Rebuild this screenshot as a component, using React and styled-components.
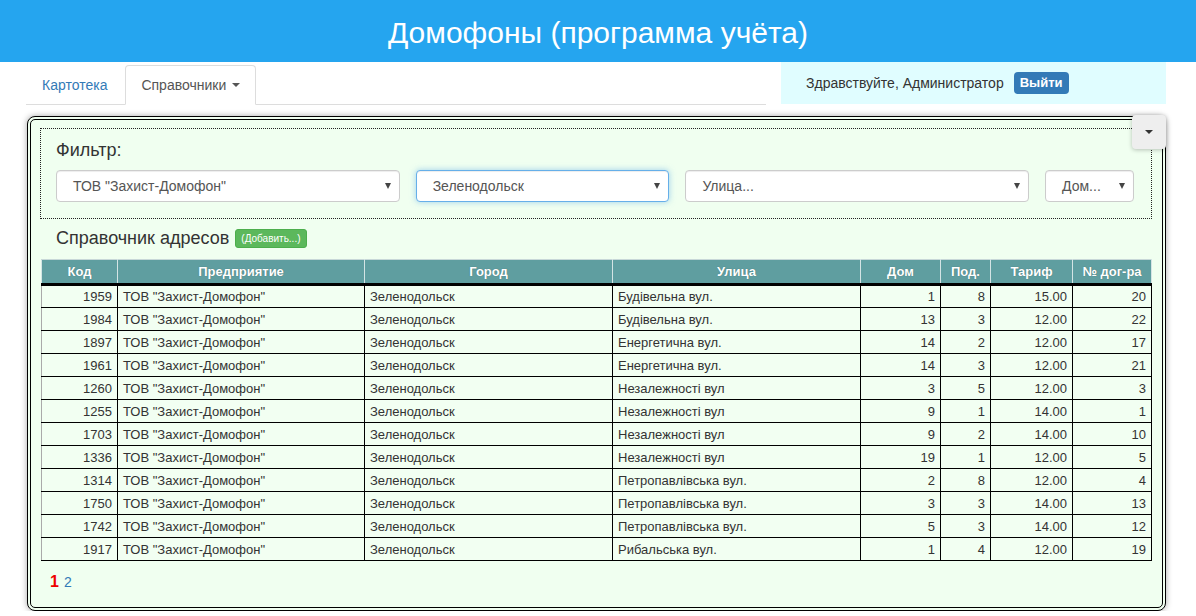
import React from "react";
import styled, { createGlobalStyle } from "styled-components";

const Global = createGlobalStyle`
  html, body { margin: 0; padding: 0; background: #fff; }
  body { font-family: "Liberation Sans", Arial, sans-serif; font-size: 14px; color: #333; }
  * { box-sizing: border-box; }
`;

const Header = styled.header`
  height: 62px;
  background: #25a5ef;
  display: flex;
  align-items: center;
  justify-content: center;
  padding-top: 4px;
`;

const Title = styled.h1`
  margin: 0;
  color: #fff;
  font-size: 30px;
  font-weight: normal;
  line-height: 1;
`;

const Container = styled.div`
  width: 1140px;
  margin-left: 26px;
`;

const NavRow = styled.div`
  display: flex;
  align-items: stretch;
  height: 43px;
`;

const Tabs = styled.ul`
  list-style: none;
  margin: 0;
  padding: 2px 0 0;
  width: 740px;
  display: flex;
  align-items: flex-end;
  border-bottom: 1px solid #ddd;
`;

const Tab = styled.li`
  margin-right: 2px;
  margin-bottom: -1px;
  height: 40px;
  padding: 10px 15px;
  line-height: 20px;
  font-size: 14px;
  color: ${(p) => (p.$active ? "#555" : "#337ab7")};
  background: ${(p) => (p.$active ? "#fff" : "transparent")};
  border: 1px solid ${(p) => (p.$active ? "#ddd" : "transparent")};
  border-bottom-color: transparent;
  border-radius: 4px 4px 0 0;
  display: flex;
  align-items: center;
  gap: 6px;
`;

const Caret = styled.span`
  display: inline-block;
  width: 0;
  height: 0;
  border-top: 4px solid ${(p) => p.$color || "#555"};
  border-left: 4px solid transparent;
  border-right: 4px solid transparent;
`;

const UserBox = styled.div`
  margin-left: 15px;
  width: 385px;
  height: 42px;
  background: #e0fdff;
  display: flex;
  align-items: center;
  padding-left: 25px;
  gap: 10px;
  font-size: 14px;
  color: #333;
`;

const LogoutButton = styled.span`
  background: #337ab7;
  color: #fff;
  font-weight: bold;
  font-size: 13px;
  line-height: 18px;
  padding: 2px 6px;
  border-radius: 4px;
`;

const Panel = styled.section`
  position: relative;
  margin-top: 11px;
  margin-left: 1px;
  width: 1139px;
  background: #f0fff0;
  border: 4px double #000;
  border-radius: 8px;
  box-shadow: 0 0 6px rgba(0, 0, 0, 0.35);
  padding: 8px 10px 2px 9px;
`;

const ToggleButton = styled.div`
  position: absolute;
  top: -5px;
  right: -4px;
  width: 34px;
  height: 34px;
  background: #eeeeee;
  border-radius: 4px;
  box-shadow: 0 1px 4px rgba(0, 0, 0, 0.25);
  display: flex;
  align-items: center;
  justify-content: center;
`;

const FilterBox = styled.div`
  border: 1px dotted #222;
  padding: 9px 17px 16px 15px;
`;

const Label = styled.div`
  font-size: 18px;
  line-height: 24px;
  color: #333;
  margin-bottom: 8px;
`;

const SelectRow = styled.div`
  display: flex;
  gap: 16px;
`;

const Select = styled.div`
  width: ${(p) => p.$w}px;
  height: 32px;
  background: #fff;
  border: 1px solid ${(p) => (p.$focus ? "#66afe9" : "#ccc")};
  border-radius: 4px;
  box-shadow: ${(p) =>
    p.$focus
      ? "inset 0 1px 1px rgba(0,0,0,.075), 0 0 6px rgba(102,175,233,.6)"
      : "inset 0 1px 1px rgba(0,0,0,.075)"};
  display: flex;
  align-items: center;
  justify-content: space-between;
  padding: 0 8px 0 16px;
  font-size: 14px;
  color: #555;
`;

const Arrow = styled.span`
  width: 0;
  height: 0;
  border-top: 6px solid #444;
  border-left: 3.5px solid transparent;
  border-right: 3.5px solid transparent;
`;

const SectionRow = styled.div`
  display: flex;
  align-items: center;
  margin: 9px 0 11px 16px;
  height: 20px;
  gap: 6px;
`;

const SectionTitle = styled.span`
  font-size: 18px;
  color: #333;
`;

const AddButton = styled.span`
  background: #5cb85c;
  border: 1px solid #4cae4c;
  color: #fff;
  font-size: 10px;
  line-height: 13px;
  padding: 2px 5px;
  border-radius: 3px;
`;

const Table = styled.table`
  margin: 0 1px;
  width: 1110px;
  table-layout: fixed;
  border-collapse: collapse;
  font-size: 13px;
`;

const Th = styled.th`
  background: #5f9ea0;
  color: #fff;
  font-weight: bold;
  height: 25px;
  padding: 0 4px;
  text-align: center;
  border-top: 1px solid #c8d8d8;
  border-left: 1px solid #d4e4e4;
  border-right: 1px solid #d4e4e4;
  border-bottom: 3px solid #000;
  text-shadow: 0 0 1px rgba(0, 0, 0, 0.35);
`;

const Td = styled.td`
  height: 23px;
  padding: 0 5px;
  color: #333;
  background: #f2fff2;
  border: 1px solid #000;
  text-align: ${(p) => (p.$right ? "right" : "left")};
  white-space: nowrap;
  overflow: hidden;
  &:first-child { border-left-color: #aaa; }
`;

const Pager = styled.div`
  margin: 12px 0 12px 10px;
  display: flex;
  align-items: baseline;
  gap: 5px;
  height: 20px;
`;

const PageLink = styled.span`
  color: ${(p) => (p.$current ? "#e00" : "#337ab7")};
  font-weight: ${(p) => (p.$current ? "bold" : "normal")};
  font-size: ${(p) => (p.$current ? "16px" : "14px")};
`;

const columns = [
  { title: "Код", w: 76 },
  { title: "Предприятие", w: 247 },
  { title: "Город", w: 248 },
  { title: "Улица", w: 248 },
  { title: "Дом", w: 80 },
  { title: "Под.", w: 50 },
  { title: "Тариф", w: 82 },
  { title: "№ дог-ра", w: 79 },
];

const rows = [
  [1959, "Будівельна вул.", 1, 8, "15.00", 20],
  [1984, "Будівельна вул.", 13, 3, "12.00", 22],
  [1897, "Енергетична вул.", 14, 2, "12.00", 17],
  [1961, "Енергетична вул.", 14, 3, "12.00", 21],
  [1260, "Незалежності вул", 3, 5, "12.00", 3],
  [1255, "Незалежності вул", 9, 1, "14.00", 1],
  [1703, "Незалежності вул", 9, 2, "14.00", 10],
  [1336, "Незалежності вул", 19, 1, "12.00", 5],
  [1314, "Петропавлівська вул.", 2, 8, "12.00", 4],
  [1750, "Петропавлівська вул.", 3, 3, "14.00", 13],
  [1742, "Петропавлівська вул.", 5, 3, "14.00", 12],
  [1917, "Рибальська вул.", 1, 4, "12.00", 19],
];

export default function App() {
  return (
    <>
      <Global />
      <Header>
        <Title>Домофоны (программа учёта)</Title>
      </Header>
      <Container>
        <NavRow>
          <Tabs>
            <Tab>Картотека</Tab>
            <Tab $active>
              Справочники <Caret />
            </Tab>
          </Tabs>
          <UserBox>
            <span>Здравствуйте, Администратор</span>
            <LogoutButton>Выйти</LogoutButton>
          </UserBox>
        </NavRow>
        <Panel>
          <ToggleButton>
            <Caret $color="#333" />
          </ToggleButton>
          <FilterBox>
            <Label>Фильтр:</Label>
            <SelectRow>
              <Select $w={344}>
                <span>ТОВ "Захист-Домофон"</span>
                <Arrow />
              </Select>
              <Select $w={254} $focus>
                <span>Зеленодольск</span>
                <Arrow />
              </Select>
              <Select $w={344}>
                <span>Улица...</span>
                <Arrow />
              </Select>
              <Select $w={89}>
                <span>Дом...</span>
                <Arrow />
              </Select>
            </SelectRow>
          </FilterBox>
          <SectionRow>
            <SectionTitle>Справочник адресов</SectionTitle>
            <AddButton>(Добавить...)</AddButton>
          </SectionRow>
          <Table>
            <colgroup>
              {columns.map((c) => (
                <col key={c.title} style={{ width: c.w }} />
              ))}
            </colgroup>
            <thead>
              <tr>
                {columns.map((c) => (
                  <Th key={c.title}>{c.title}</Th>
                ))}
              </tr>
            </thead>
            <tbody>
              {rows.map((r) => (
                <tr key={r[0]}>
                  <Td $right>{r[0]}</Td>
                  <Td>ТОВ "Захист-Домофон"</Td>
                  <Td>Зеленодольск</Td>
                  <Td>{r[1]}</Td>
                  <Td $right>{r[2]}</Td>
                  <Td $right>{r[3]}</Td>
                  <Td $right>{r[4]}</Td>
                  <Td $right>{r[5]}</Td>
                </tr>
              ))}
            </tbody>
          </Table>
          <Pager>
            <PageLink $current>1</PageLink>
            <PageLink>2</PageLink>
          </Pager>
        </Panel>
      </Container>
    </>
  );
}
